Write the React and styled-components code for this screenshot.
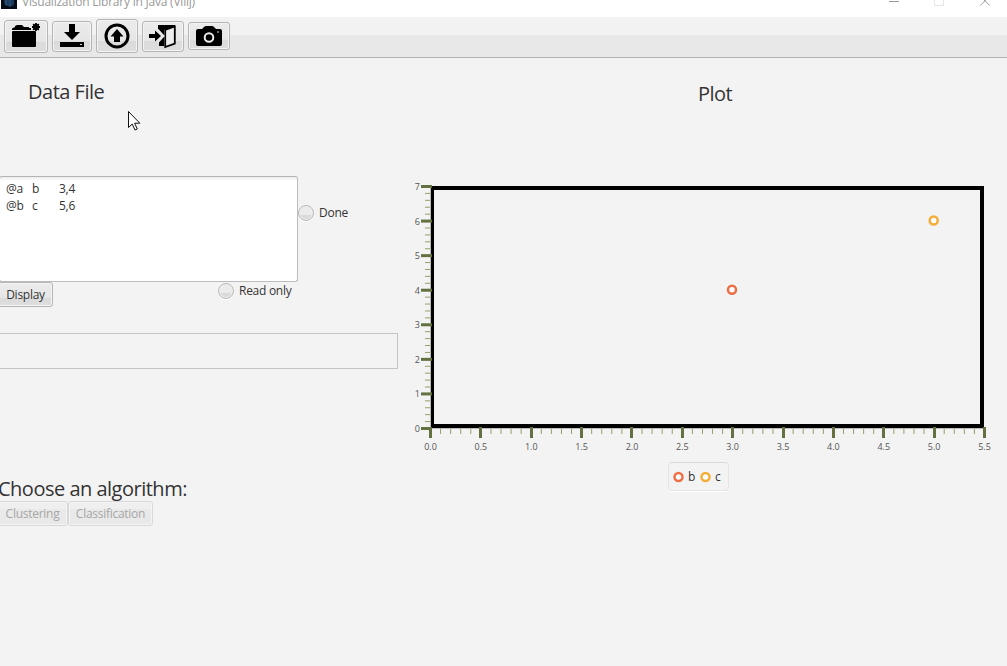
import React from "react";
import styled, { createGlobalStyle, css } from "styled-components";

const GlobalStyle = createGlobalStyle`
  * { box-sizing: border-box; }
  body { margin: 0; background: #f3f3f3; overflow: hidden; }
  button { margin: 0; font: inherit; }
`;

const Window = styled.div`
  position: relative;
  display: flex;
  flex-direction: column;
  width: 1007px;
  height: 666px;
  overflow: hidden;
  background: #f3f3f3;
  color: #333;
  font-family: "Open Sans", "Noto Sans", sans-serif;
  font-size: 12px;
  letter-spacing: -0.27px;
`;

const TitleBar = styled.header`
  display: flex;
  flex: none;
  justify-content: space-between;
  height: 17px;
  padding: 0 16px 0 1px;
  background: #fff;
  overflow: hidden;
`;

const TitleGroup = styled.div`
  display: flex;
  gap: 5px;
`;

const Title = styled.span`
  margin-top: -7px;
  height: 18px;
  line-height: 18px;
  color: #999;
  white-space: nowrap;
  letter-spacing: -0.22px;
`;

const ToolBar = styled.nav`
  display: flex;
  flex: none;
  align-items: center;
  gap: 4px;
  height: 41px;
  padding: 0 4px 3px;
  border-bottom: 1px solid #b1b1b1;
  background: linear-gradient(#f2f2f2 0 18px, #e8e8e8 18px);
`;

const raised = css`
  border: 1px solid #b5b5b5;
  border-radius: 3px;
  background: linear-gradient(#ebebeb 0%, #e6e6e6 66%, #dadada 67%, #dedede 100%);
  box-shadow: inset 0 0 0 1px #f4f4f4;
`;

const ToolButton = styled.button`
  ${raised}
  display: flex;
  align-items: center;
  justify-content: center;
  width: ${(p) => p.$w}px;
  height: ${(p) => p.$h}px;
  margin-top: ${(p) => p.$drop || 0}px;
  padding: 0;
  color: #000;
  svg { display: block; }
`;

const Body = styled.main`
  display: flex;
  flex: 1;
`;

const DataPane = styled.section`
  display: flex;
  flex-direction: column;
  width: 405px;
`;

const Heading = styled.h2`
  height: 26px;
  margin: ${(p) => p.$margin};
  line-height: 26px;
  font-size: 20px;
  font-weight: 400;
  white-space: nowrap;
  letter-spacing: -0.5px;
`;

const EditorRow = styled.div`
  display: flex;
  height: 106px;
  margin-top: 71px;
`;

const Editor = styled.div`
  display: grid;
  grid-template-columns: 26px 27px auto;
  grid-auto-rows: 17px;
  align-content: start;
  width: 299px;
  height: 106px;
  margin-left: -1px;
  padding: 3px 0 0 6px;
  border: 1px solid #bcbcbc;
  border-top-color: #b4b4b4;
  border-radius: 3px;
  background: linear-gradient(#ededed, #fff 4px);
  line-height: 18px;
`;

const RadioLabel = styled.label`
  display: flex;
  align-items: center;
  gap: 5px;
  height: 18px;
  margin: ${(p) => p.$margin};
  line-height: 18px;
  white-space: nowrap;
`;

const RadioDot = styled.span`
  width: 16px;
  height: 16px;
  border: 1px solid #b9b9b9;
  border-radius: 50%;
  background: linear-gradient(#ebebeb 0 62%, #dadada 63%);
  box-shadow: 0 1px 0 #fff, inset 0 0 0 1px #eee;
`;

const ActionRow = styled.div`
  display: flex;
  height: 25px;
  margin-top: ${(p) => p.$lift || 0}px;
`;

const TextButton = styled.button`
  ${raised}
  width: ${(p) => p.$w}px;
  height: 25px;
  margin-left: ${(p) => p.$left || 0}px;
  padding: 1px 0 0;
  color: #333;
  line-height: 22px;
  white-space: nowrap;
  letter-spacing: inherit;
  ${(p) => p.disabled && css`
    border-color: #d8d8d8;
    background: linear-gradient(#efefef 0 30%, #e9e9e9 31%);
    color: #a6a6a6;
  `}
`;

const MessageBox = styled.div`
  width: 399px;
  height: 36px;
  margin: 26px 0 0 -1px;
  border: 1px solid #c4c4c4;
`;

const PlotPane = styled.section`
  display: flex;
  flex-direction: column;
  width: 602px;
`;

const Chart = styled.svg`
  display: block;
  width: 602px;
  height: 290px;
  margin-top: 76px;
  overflow: visible;
  text { fill: #555; font-size: 9px; letter-spacing: 0; }
`;

const Legend = styled.div`
  display: flex;
  align-items: center;
  width: 61px;
  height: 29px;
  margin: -11px 0 0 263px;
  padding-left: 3px;
  border: 1px solid #e4e4e4;
  border-top-color: #d8d8d8;
  border-radius: 4px;
  box-shadow: 0 1px 0 #fff;
`;

const LegendItem = styled.span`
  display: flex;
  align-items: center;
  gap: 4px;
  width: 27px;
  line-height: 18px;
`;

const Pointer = styled.svg`
  position: absolute;
  left: 128px;
  top: 111px;
`;

const PlotPoint = ({ x, y, color }) => (
  <circle cx={x} cy={y} r="4" fill="#fff" stroke={color} strokeWidth="2.5" />
);

const RED = "#ee6f45";
const AMBER = "#f5ac38";
const px = (v) => 25.5 + v * (554 / 5.5);
const py = (v) => 303.5 - v * (242 / 7);

function ScatterPlot() {
  const xs = Array.from({ length: 56 }, (_, i) => i);
  const ys = Array.from({ length: 36 }, (_, i) => i);
  return (
    <Chart viewBox="0 58 602 290">
      <path d="M25.5 61V303.5H579" fill="none" stroke="#bbb" />
      <path d="M26 61H579V303H26ZM29 65V299H575V65Z" fill="#000" fillRule="evenodd" />
      {ys.map((i) =>
        i % 5 ? (
          <path key={i} d={`M20 ${py(i / 5)}H25`} stroke="#949f69" />
        ) : (
          <g key={i}>
            <path d={`M16 ${py(i / 5)}H27`} stroke="#637040" strokeWidth="3" />
            <text x="15" y={py(i / 5) + 3.5} textAnchor="end">{i / 5}</text>
          </g>
        )
      )}
      {xs.map((i) =>
        i % 5 ? (
          <path key={i} d={`M${px(i / 10)} 304V309`} stroke="#949f69" />
        ) : (
          <g key={i}>
            <path d={`M${Math.round(px(i / 10) - 0.5) + 0.5} 302V313`} stroke="#637040" strokeWidth="3" />
            <text x={px(i / 10)} y="325" textAnchor="middle">{(i / 10).toFixed(1)}</text>
          </g>
        )
      )}
      <PlotPoint x={327} y={164.7} color={RED} />
      <PlotPoint x={528.7} y={95.5} color={AMBER} />
    </Chart>
  );
}

const Marker = ({ color }) => (
  <svg width="12" height="12">
    <PlotPoint x={6.5} y={6} color={color} />
  </svg>
);

const AppMark = () => (
  <svg width="16" height="9">
    <path d="M0 0H16V9H0Z" fill="#070d18" />
    <path d="M3 0H13V5L9 7L4 5Z" fill="#1c3b5c" />
    <path d="M5 0V5M9 0V6" stroke="#315b80" />
  </svg>
);

const WindowControls = () => (
  <svg width="103" height="10" fill="none">
    <path d="M1 1.5H11" stroke="#999" />
    <path d="M46.500 -3V5.500H55.500V-3" stroke="#e5e5e5" />
    <path d="M87.500 -4L97 5.500M97 -4L87.500 5.500" stroke="#999" transform="translate(4.750)" />
  </svg>
);

const NewIcon = () => (
  <svg width="30" height="26" viewBox="0 0 30 26">
    <path d="M1 7V5.500L4 4V3L6 2H11L13 4H18V5H20V7Z" />
    <path d="M1 9Q1 8 2 8H24Q25 8 25 9V23Q25 24 24 24H2Q1 24 1 23Z" />
    <path d="M25 0V8M21 4H29M22.200 1.200L27.800 6.800M27.800 1.200L22.200 6.800" stroke="#000" strokeWidth="1.800" />
    <circle cx="25" cy="4" r="3" />
  </svg>
);

const SaveIcon = () => (
  <svg width="24" height="24" viewBox="0 0 24 24">
    <path d="M9 0H15V8H20L12 16L4 8H9Z" />
    <path d="M0 18H24V23H0ZM20 20V21H22V20Z" fillRule="evenodd" />
  </svg>
);

const LoadIcon = () => (
  <svg width="26" height="26" viewBox="0 0 26 26">
    <circle cx="13" cy="13" r="11" fill="none" stroke="#000" strokeWidth="3" />
    <path d="M13 6L19.500 13.500H16V19H10V13.500H6.500Z" />
  </svg>
);

const ExitIcon = () => (
  <svg width="28" height="25" viewBox="0 0 28 25">
    <path d="M9 1H26V3L15 6V22H10V17L15 12L9 6Z" />
    <path d="M16.200 6L25.800 2.500V19.500L16.200 23Z" fill="#ededed" stroke="#000" strokeWidth="1.800" />
    <path d="M0 10H6V6.500L12 12L6 17.500V14H0Z" />
    <path d="M9 5.500L15 12L9 18.500" fill="none" stroke="#eee" strokeWidth="1.200" />
  </svg>
);

const CameraIcon = () => (
  <svg width="26" height="22" viewBox="0 0 26 22">
    <path d="M2 4H6L8 2Q9 1 10 1H16Q17 1 18 2L20 4H24Q26 4 26 6V19Q26 21 24 21H2Q0 21 0 19V6Q0 4 2 4Z" />
    <circle cx="13" cy="12.500" r="4.300" stroke="#eee" strokeWidth="2" />
    <path d="M21 7H23" stroke="#ddd" />
  </svg>
);

export default function App() {
  return (
    <Window>
      <GlobalStyle />
      <TitleBar>
        <TitleGroup>
          <AppMark />
          <Title>Visualization Library in Java (Villj)</Title>
        </TitleGroup>
        <WindowControls />
      </TitleBar>
      <ToolBar>
        <ToolButton $w={44} $h={33} $drop={1} aria-label="New"><NewIcon /></ToolButton>
        <ToolButton $w={40} $h={31} $drop={1} aria-label="Save"><SaveIcon /></ToolButton>
        <ToolButton $w={42} $h={34} aria-label="Load"><LoadIcon /></ToolButton>
        <ToolButton $w={42} $h={31} $drop={1} aria-label="Exit"><ExitIcon /></ToolButton>
        <ToolButton $w={42} $h={28} aria-label="Screenshot"><CameraIcon /></ToolButton>
      </ToolBar>
      <Body>
        <DataPane>
          <Heading $margin="21px 0 0 28px">Data File</Heading>
          <EditorRow>
            <Editor>
              <span>@a</span><span>b</span><span>3,4</span>
              <span>@b</span><span>c</span><span>5,6</span>
            </Editor>
            <RadioLabel $margin="28px 0 0"><RadioDot />Done</RadioLabel>
          </EditorRow>
          <ActionRow>
            <TextButton $w={55} $left={-2}>Display</TextButton>
            <RadioLabel $margin="0 0 0 165px"><RadioDot />Read only</RadioLabel>
          </ActionRow>
          <MessageBox />
          <Heading $margin="107px 0 0 -2px">Choose an algorithm:</Heading>
          <ActionRow $lift={-1}>
            <TextButton disabled $w={71} $left={-3}>Clustering</TextButton>
            <TextButton disabled $w={85}>Classification</TextButton>
          </ActionRow>
        </DataPane>
        <PlotPane>
          <Heading $margin="23px 0 0 293px">Plot</Heading>
          <ScatterPlot />
          <Legend>
            <LegendItem><Marker color={RED} />b</LegendItem>
            <LegendItem><Marker color={AMBER} />c</LegendItem>
          </Legend>
        </PlotPane>
      </Body>
      <Pointer width="13" height="20" viewBox="0 0 13 20">
        <path d="M.5 .5V16.500L4.200 13L7 19L9.300 18L6.600 12.200H11.800Z" fill="#fff" stroke="#111" />
      </Pointer>
    </Window>
  );
}
